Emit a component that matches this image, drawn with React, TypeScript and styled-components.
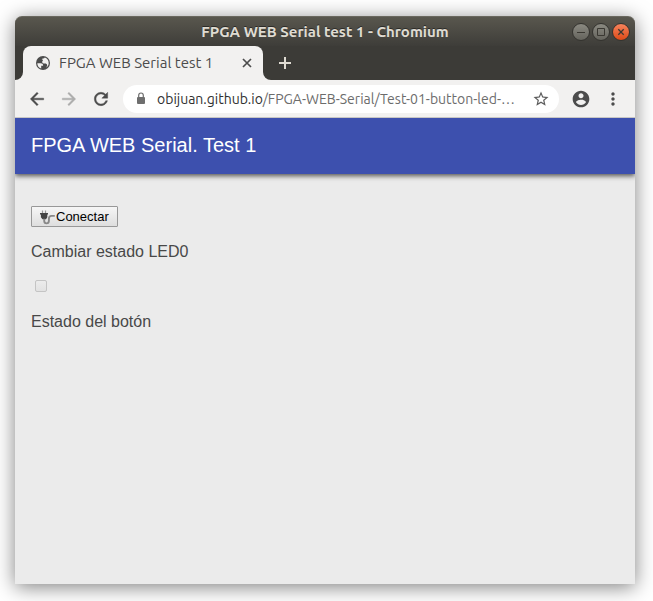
import React from "react";
import styled, { createGlobalStyle } from "styled-components";

const GlobalStyle = createGlobalStyle`
  * { box-sizing: border-box; }
  body { margin: 0; background: #fff; }
  button, input { font: inherit; margin: 0; }
`;

const uiFont = `Ubuntu, "Noto Sans", "Open Sans", sans-serif`;
const pageFont = `"Liberation Sans", Arial, sans-serif`;

const Desktop = styled.div`
  min-height: 100vh;
  padding: 16px 18px 17px 15px;
  display: flex;
`;

const Window = styled.div`
  flex: 1;
  min-width: 0;
  display: flex;
  flex-direction: column;
  border-radius: 7px 7px 0 0;
  background: #ebebeb;
  box-shadow: 0 3px 20px rgba(0, 0, 0, 0.5);
  font-family: ${uiFont};
`;

const TitleBar = styled.header`
  display: grid;
  grid-template-columns: 1fr auto 1fr;
  align-items: center;
  height: 30px;
  padding: 0 5px;
  border-radius: 7px 7px 0 0;
  border-top: 1px solid #6a685f;
  background: linear-gradient(#59574e, #3e3d39);
`;

const WindowTitle = styled.div`
  grid-column: 2;
  color: #dfdbd2;
  font-size: 15px;
  line-height: 20px;
  font-weight: 700;
  white-space: nowrap;
  text-shadow: 0 -1px 0 #2c2b28;
`;

const WindowControls = styled.div`
  display: flex;
  justify-content: flex-end;
  gap: 2px;
`;

const WindowButton = styled.button<{ $close?: boolean }>`
  display: grid;
  place-items: center;
  width: 18px;
  height: 18px;
  padding: 0;
  border: 1px solid #34332f;
  border-radius: 50%;
  color: #3a3832;
  background: ${(p) =>
    p.$close ? "linear-gradient(#f6835c, #dd4a17)" : "linear-gradient(#8a8981, #65645d)"};
`;

const TabStrip = styled.div`
  display: flex;
  height: 34px;
  background: #f2f1f0;
`;

const StripEdge = styled.div`
  width: 8px;
  background: #3c3b37;
  border-bottom-right-radius: 8px;
`;

const StripRest = styled.div`
  flex: 1;
  display: flex;
  align-items: center;
  padding-left: 12px;
  background: #3c3b37;
  border-bottom-left-radius: 8px;
`;

const TabSlot = styled.div`
  width: 240px;
  background: linear-gradient(#3c3b37 50%, #f2f1f0 50%);
`;

const Tab = styled.div`
  display: flex;
  align-items: center;
  height: 100%;
  padding: 0 8px 0 12px;
  border-radius: 8px 8px 0 0;
  background: #f2f1f0;
  color: #4c4c4c;
`;

const TabTitle = styled.span`
  flex: 1;
  padding-left: 8px;
  font-size: 15px;
  line-height: 20px;
  white-space: nowrap;
`;

const IconButton = styled.button<{ $size?: number; $color?: string }>`
  display: grid;
  place-items: center;
  flex: none;
  width: ${(p) => p.$size ?? 28}px;
  height: ${(p) => p.$size ?? 28}px;
  padding: 0;
  border: 0;
  background: none;
  color: ${(p) => p.$color ?? "#4c4c4c"};
`;

const Toolbar = styled.nav`
  display: flex;
  align-items: center;
  gap: 4px;
  height: 38px;
  padding: 0 8px;
  border-bottom: 1px solid #c8c7c5;
  background: #f2f1f0;
`;

const AddressBar = styled.div`
  flex: 1;
  min-width: 0;
  display: flex;
  align-items: center;
  height: 28px;
  margin: 0 4px;
  padding: 0 4px 0 10px;
  border-radius: 14px;
  background: #fff;
`;

const Address = styled.div`
  flex: 1;
  min-width: 0;
  padding: 0 4px 0 8px;
  overflow: hidden;
  text-overflow: ellipsis;
  white-space: nowrap;
  font-size: 14px;
  line-height: 20px;
  color: #6c6c6c;
`;

const Host = styled.span`
  color: #303030;
`;

const AppHeader = styled.div`
  display: flex;
  align-items: center;
  height: 56px;
  padding: 0 16px 2px;
  background: #3d50ae;
  box-shadow: 0 2px 5px rgba(0, 0, 0, 0.65);
  clip-path: inset(0 0 -10px 0);
`;

const AppTitle = styled.h1`
  margin: 0;
  color: #fff;
  font-family: ${pageFont};
  font-size: 20px;
  line-height: 24px;
  font-weight: 400;
`;

const Content = styled.main`
  display: flex;
  flex-direction: column;
  align-items: flex-start;
  padding: 32px 16px;
  font-family: ${pageFont};
`;

const ConnectButton = styled.button`
  display: flex;
  align-items: center;
  height: 21px;
  padding: 0 8px 0 7px;
  border: 1px solid #989898;
  border-radius: 1px;
  background: linear-gradient(#f6f6f6, #dedede);
  color: #000;
  font-size: 13px;
  line-height: 16px;
`;

const Text = styled.p`
  margin: 0;
  color: #484848;
  font-size: 16px;
  line-height: 24px;
`;

const LedControl = styled.label`
  display: flex;
  flex-direction: column;
  align-items: flex-start;
  gap: 16px;
  margin: 13px 0 18px;
`;

const Checkbox = styled.input`
  appearance: none;
  width: 12px;
  height: 12px;
  margin-left: 4px;
  border: 1px solid #c4c4c4;
  border-radius: 2px;
  background: linear-gradient(#ececec, #e2e2e2);
`;

const Glyph = ({ d, size, weight = 0 }: { d: string; size: number; weight?: number }) => (
  <svg
    width={size}
    height={size}
    viewBox="0 0 24 24"
    fill="currentColor"
    stroke="currentColor"
    strokeWidth={weight}
    aria-hidden="true"
  >
    <path d={d} />
  </svg>
);

const icons = {
  back: "M20 11H7.83l5.59-5.59L12 4l-8 8 8 8 1.41-1.41L7.83 13H20v-2z",
  forward: "M12 4l-1.41 1.41L16.17 11H4v2h12.17l-5.58 5.59L12 20l8-8z",
  reload:
    "M17.65 6.35C16.2 4.9 14.21 4 12 4c-4.42 0-7.99 3.58-7.99 8s3.57 8 7.99 8c3.73 0 6.84-2.55 7.73-6h-2.08c-.82 2.33-3.04 4-5.65 4-3.31 0-6-2.69-6-6s2.69-6 6-6c1.66 0 3.14.69 4.22 1.78L13 11h7V4l-2.35 2.35z",
  star: "M22 9.24l-7.19-.62L12 2 9.19 8.63 2 9.24l5.46 4.73L5.82 21 12 17.27 18.18 21l-1.63-7.03L22 9.24zM12 15.4l-3.76 2.27 1-4.28-3.32-2.88 4.38-.38L12 6.1l1.71 4.04 4.38.38-3.32 2.88 1 4.28L12 15.4z",
  account:
    "M12 2C6.48 2 2 6.48 2 12s4.48 10 10 10 10-4.48 10-10S17.52 2 12 2zm0 3c1.66 0 3 1.34 3 3s-1.34 3-3 3-3-1.34-3-3 1.34-3 3-3zm0 14.2c-2.5 0-4.71-1.28-6-3.22.03-1.99 4-3.08 6-3.08 1.99 0 5.97 1.09 6 3.08-1.29 1.94-3.5 3.22-6 3.22z",
  menu: "M12 8c1.1 0 2-.9 2-2s-.9-2-2-2-2 .9-2 2 .9 2 2 2zm0 2c-1.1 0-2 .9-2 2s.9 2 2 2 2-.9 2-2-.9-2-2-2zm0 6c-1.1 0-2 .9-2 2s.9 2 2 2 2-.9 2-2-.9-2-2-2z",
};

const LineIcon = ({ d, size, width }: { d: string; size: number; width: number }) => (
  <svg
    width={size}
    height={size}
    viewBox={`0 0 ${size} ${size}`}
    fill="none"
    stroke="currentColor"
    strokeWidth={width}
    aria-hidden="true"
  >
    <path d={d} />
  </svg>
);

const GlobeIcon = () => (
  <svg width="16" height="16" viewBox="0 0 16 16" aria-hidden="true">
    <circle cx="8" cy="8" r="7" fill="#4c4c4c" />
    <path
      d="M2.300 8.200h3.300c1.700 0 2.500.8 2.500 2.100v.5H6.200v2.700C3.900 12.900 2.300 10.800 2.300 8.200z"
      fill="#f2f1f0"
    />
    <path
      d="M9.800 2.600c2.300.8 3.900 2.900 3.900 5.400 0 2-.9 3.600-2.500 4.600.2-1 1-1.200 1-2.200 0-1.500-1.100-1.900-2.300-1.900-1.500 0-2.700-.4-2.700-1.600 0-1 .9-1.300.9-1.800 0-.4-1.300-.2-1.300-.8 0-.7 2.500-.4 3-1.700z"
      fill="#f2f1f0"
    />
  </svg>
);

const LockIcon = () => (
  <svg width="16" height="16" viewBox="0 0 16 16" aria-hidden="true">
    <rect x="4" y="6" width="8" height="7" rx="1" fill="#6e6e6e" />
    <path d="M5.7 6V4.300a2.300 2.300 0 0 1 4.600 0V6" fill="none" stroke="#6e6e6e" strokeWidth="1.2" />
  </svg>
);

const PlugIcon = () => (
  <svg width="17" height="16" viewBox="0 0 17 16" fill="none" aria-hidden="true">
    <path d="M3.500 1.500v3M6.500 1.500v3" stroke="#999" strokeWidth="1.200" />
    <path d="M1 4h8v1.200l-.7.5v2.600L7 10.300H3.500L1.900 8.300V5.700L1 5.200z" fill="#444" />
    <path
      d="M5.200 9.800v2c0 3.400 4.700 3.400 4.700 0V9.800c0-2.200 1-2.900 2.600-2.900h3.300"
      stroke="#888"
      strokeWidth="1.900"
    />
  </svg>
);

export default function App() {
  return (
    <>
      <GlobalStyle />
      <Desktop>
        <Window>
          <TitleBar>
            <WindowTitle>FPGA WEB Serial test 1 - Chromium</WindowTitle>
            <WindowControls>
              <WindowButton aria-label="Minimize">
                <LineIcon size={10} width={1} d="M1 5.5h8" />
              </WindowButton>
              <WindowButton aria-label="Maximize">
                <LineIcon size={10} width={1} d="M1.5 1.5h7v7h-7z" />
              </WindowButton>
              <WindowButton $close aria-label="Close">
                <LineIcon size={10} width={1.3} d="M2.300 2.300l5.400 5.400M7.700 2.300L2.300 7.700" />
              </WindowButton>
            </WindowControls>
          </TitleBar>

          <TabStrip>
            <StripEdge />
            <TabSlot>
              <Tab>
                <GlobeIcon />
                <TabTitle>FPGA WEB Serial test 1</TabTitle>
                <IconButton $size={16} aria-label="Close tab">
                  <LineIcon size={16} width={1.7} d="M4 4l8 8M12 4l-8 8" />
                </IconButton>
              </Tab>
            </TabSlot>
            <StripRest>
              <IconButton $size={20} $color="#dfdbd2" aria-label="New tab">
                <LineIcon size={14} width={2} d="M1 7h12M7 1v12" />
              </IconButton>
            </StripRest>
          </TabStrip>

          <Toolbar>
            <IconButton aria-label="Back">
              <Glyph d={icons.back} size={20} weight={0.5} />
            </IconButton>
            <IconButton $color="#adadac" aria-label="Forward">
              <Glyph d={icons.forward} size={20} weight={0.5} />
            </IconButton>
            <IconButton aria-label="Reload">
              <Glyph d={icons.reload} size={20} weight={0.5} />
            </IconButton>
            <AddressBar>
              <LockIcon />
              <Address>
                <Host>obijuan.github.io</Host>/FPGA-WEB-Serial/Test-01-button-led-…
              </Address>
              <IconButton $color="#5c5c5c" aria-label="Bookmark">
                <Glyph d={icons.star} size={18} />
              </IconButton>
            </AddressBar>
            <IconButton aria-label="Profile">
              <Glyph d={icons.account} size={20} />
            </IconButton>
            <IconButton aria-label="Menu">
              <Glyph d={icons.menu} size={20} />
            </IconButton>
          </Toolbar>

          <AppHeader>
            <AppTitle>FPGA WEB Serial. Test 1</AppTitle>
          </AppHeader>

          <Content>
            <ConnectButton>
              <PlugIcon />
              Conectar
            </ConnectButton>
            <LedControl>
              <Text as="span">Cambiar estado LED0</Text>
              <Checkbox type="checkbox" disabled />
            </LedControl>
            <Text>Estado del botón</Text>
          </Content>
        </Window>
      </Desktop>
    </>
  );
}
